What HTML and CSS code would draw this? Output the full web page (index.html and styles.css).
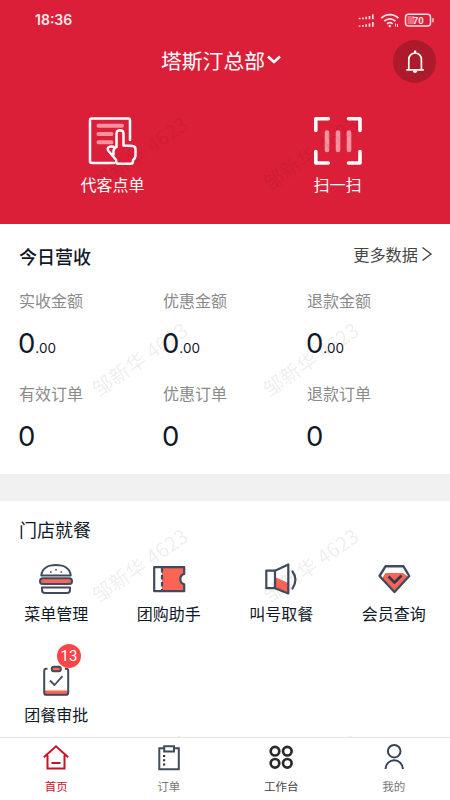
FILE: index.html
```html
<!DOCTYPE html>
<html lang="zh-CN">
<head>
<meta charset="utf-8">
<meta name="viewport" content="width=device-width, initial-scale=1">
<title>塔斯汀总部</title>
<link rel="stylesheet" href="styles.css">
</head>
<body>
<div class="app">
  <header class="header">
    <div class="status">
      <span class="time">18:36</span>
      <svg class="status-icons" width="78" height="18" viewBox="0 0 78 18" fill="none" stroke="#ffdfe2">
        <g stroke-width="1.7">
          <path d="M2.600 8.300V6.800M5.900 8.300V6.400M9.200 8.300V5.700M12.500 8.300V4.900M15.800 8.300V3.200"/>
          <path d="M2.600 15.800V14.400M5.900 15.800V14M9.200 15.800V13.200M12.500 15.800V12.400M15.800 15.800V11"/>
        </g>
        <path d="M24.200 7.200C29 2.400 36.600 2.400 41.500 7.200M27.200 10.200c3.400-3.200 8-3.200 11.300 0M30 12.900c1.800-1.500 4-1.500 5.700 0" stroke-width="1.8"/>
        <circle cx="32.800" cy="15" r="1.200" fill="#ffdfe2" stroke="none"/>
        <path d="M38.500 15.500v-3M40.500 13v3" stroke-width="1"/>
        <rect x="48.500" y="3.200" width="25" height="11.800" rx="3" stroke-width="1.500"/>
        <path d="M50.500 5h7v8.200h-7z" fill="#ed6a7b" stroke="none"/>
        <path d="M76 7.200v4" stroke-width="1.500"/>
        <text class="battery" x="61.300" y="12.500" text-anchor="middle">70</text>
      </svg>
    </div>
    <div class="title-row">
      <span class="store">塔斯汀总部</span>
      <svg class="caret" width="16" height="12" viewBox="0 0 16 12"><path d="M2 2.500L8 8L14 2.500" fill="none" stroke="#fff" stroke-width="2.600"/></svg>
      <span class="bell">
        <svg width="20" height="26" viewBox="0 0 20 26" fill="none" stroke="#fff" stroke-width="1.700"><path d="M3.800 20.500V10.300a6.300 6.300 0 0 1 12.600 0v10.200M1.300 20.900h17.500"/><path d="M10.100 1.500v2.500" stroke-width="2.200"/><path d="M7.700 21.500h4.800a2.400 2.400 0 0 1-4.800 0z" fill="#fff" stroke="none"/></svg>
      </span>
    </div>
    <div class="actions">
      <div class="action">
        <svg width="50" height="50" viewBox="0 0 50 50" fill="none" stroke="#fff" stroke-width="2.500" stroke-linecap="round" stroke-linejoin="round">
          <path d="M42 24V4.500Q42 2.500 40 2.500H4Q2 2.500 2 4.500v40.500Q2 47 4 47H26"/>
          <path d="M10.500 9.700H34M10.500 18h13M10.500 26.300h13" stroke="#f7929f" stroke-width="4"/>
          <path d="M28.500 31V17.800Q28.500 14.300 32 14.300t3.500 3.500V29.500l9 .5q3 .3 3 3v7q0 2-2.500 4v1.500q0 2.300-2.300 2.300H30.500q-2.300 0-2.300-2.300V44l-7.700-9q-1.800-2.800.5-4 2-1 4.500-.300M28.500 31q-3 1.500-3 4v3.500"/>
        </svg>
        <span>代客点单</span>
      </div>
      <div class="action">
        <svg width="50" height="50" viewBox="0 0 50 50" fill="none" stroke="#fff" stroke-width="3.600" stroke-linecap="round" stroke-linejoin="round">
          <path d="M2.800 14.500V2.800h12.500M35.500 2.800H47v11.700M2.800 35.500V47h12.500M35.500 47H47V35.500"/>
          <path d="M14 16.500v17.500M25 16.500v17.500M36 16.500v17.500" stroke="#f7929f" stroke-width="4.600"/>
        </svg>
        <span>扫一扫</span>
      </div>
    </div>
  </header>

  <section class="revenue">
    <div class="revenue-head">
      <h2>今日营收</h2>
      <span class="more">更多数据<svg width="12" height="16" viewBox="0 0 12 16"><path d="M1.500 1.500L10 8l-8.500 6.500" fill="none" stroke="#444" stroke-width="1.400"/></svg></span>
    </div>
    <div class="stats">
      <div class="stat"><span class="label">实收金额</span><span class="value">0<small>.00</small></span></div>
      <div class="stat"><span class="label">优惠金额</span><span class="value">0<small>.00</small></span></div>
      <div class="stat"><span class="label">退款金额</span><span class="value">0<small>.00</small></span></div>
      <div class="stat"><span class="label">有效订单</span><span class="value">0</span></div>
      <div class="stat"><span class="label">优惠订单</span><span class="value">0</span></div>
      <div class="stat"><span class="label">退款订单</span><span class="value">0</span></div>
    </div>
  </section>

  <section class="dining">
    <h2>门店就餐</h2>
    <div class="tools">
      <div class="tool">
        <svg width="36" height="36" viewBox="0 0 36 36" fill="none" stroke="#414b5e" stroke-width="2" stroke-linejoin="round">
          <path d="M3.300 14.500C4 7.500 10 4 18 4s14 3.500 14.700 10.500z"/>
          <rect x="2" y="17.300" width="32" height="5.700" rx="2.850" fill="#fa6556"/>
          <path d="M4 26.500h28v2.500q0 3-3 3H7q-3 0-3-3z"/>
          <path d="M12 11h1.600M17.200 8.800h1.600M22.500 11h1.600" stroke-width="1.400"/>
        </svg>
        <span>菜单管理</span>
      </div>
      <div class="tool">
        <svg width="36" height="36" viewBox="0 0 36 36" fill="none" stroke="#414b5e" stroke-width="2.200" stroke-linejoin="round">
          <path d="M11 6.500H33v6.700a5.200 5.200 0 0 0 0 10V30H11z" fill="#fa6556" stroke="none"/>
          <path d="M3.200 6.200h30v6.700a5.500 5.500 0 0 0 0 10.500v6.800h-30z"/>
          <path d="M11 7v23" stroke-dasharray="4.500 2.500"/>
        </svg>
        <span>团购助手</span>
      </div>
      <div class="tool">
        <svg width="36" height="36" viewBox="0 0 36 36" fill="none" stroke="#414b5e" stroke-width="2.200" stroke-linejoin="round">
          <path d="M12 16l13 6v10.500L12 26.500z" fill="#fa6556" stroke="none"/>
          <path d="M3.300 9.700H12v17.500H3.300zM12 9.700l13.300-6.200v29L12 27.200"/>
          <path d="M29.500 10.500q5.800 8 0 17" stroke-linecap="round"/>
        </svg>
        <span>叫号取餐</span>
      </div>
      <div class="tool">
        <svg width="36" height="36" viewBox="0 0 36 36" fill="none" stroke="#414b5e" stroke-width="2.400" stroke-linejoin="round">
          <path d="M9.500 12h17.500l5.500 4L18.500 30 6 17.500z" fill="#fa6556" stroke="none"/>
          <path d="M9.500 5.300h18l5.700 9.700L18.500 31 3.500 15z"/>
          <path d="M12.500 15.500l6 6 7-7" stroke="#333b4b" stroke-width="2.800"/>
        </svg>
        <span>会员查询</span>
      </div>
      <div class="tool">
        <svg width="36" height="36" viewBox="0 0 36 36" fill="none" stroke="#414b5e" stroke-width="2" stroke-linejoin="round">
          <path d="M6 28.500h24v5H6z" fill="#fa6556" stroke="none"/>
          <path d="M9.500 6.700H8.200Q6.200 6.700 6.200 8.700v22q0 2 2 2h20q2 0 2-2v-22q0-2-2-2H27"/>
          <rect x="13.800" y="4.700" width="9" height="4.600" rx="2" fill="#fa6556"/>
          <path d="M12 18.500l4.500 4.500 8-8.800" stroke-width="1.800"/>
        </svg>
        <b class="badge">13</b>
        <span>团餐审批</span>
      </div>
    </div>
  </section>

  <div class="watermarks" aria-hidden="true">
    <span>邹新华 4623</span><span>邹新华 4623</span>
    <span>邹新华 4623</span><span>邹新华 4623</span>
    <span>邹新华 4623</span><span>邹新华 4623</span>
    <span>邹新华 4623</span><span>邹新华 4623</span>
  </div>

  <nav class="tabs">
    <div class="tab active">
      <svg width="28" height="28" viewBox="0 0 28 28" fill="none" stroke="#c81427" stroke-width="2"><path d="M1.800 14.300L14 3.300l12.200 11M5.500 12v13.500h17V12M9.500 20h9"/></svg>
      <span>首页</span>
    </div>
    <div class="tab">
      <svg width="28" height="28" viewBox="0 0 28 28" fill="none" stroke="#414b5e" stroke-width="2"><path d="M9 5.200H4.300v21h19.500v-21H19M9.200 3.200H19v5.300H9.200z"/><path d="M8 13h2.200M8 17.200h2.200M8 21.400h2.200" stroke="#333"/></svg>
      <span>订单</span>
    </div>
    <div class="tab workbench">
      <svg width="28" height="28" viewBox="0 0 28 28" fill="none" stroke="#2a2a2a" stroke-width="2.700"><circle cx="8" cy="8.200" r="4.300"/><circle cx="20.300" cy="8.200" r="4.300"/><circle cx="8" cy="20.300" r="4.300"/><circle cx="20.300" cy="20.300" r="4.300"/></svg>
      <span>工作台</span>
    </div>
    <div class="tab">
      <svg width="28" height="28" viewBox="0 0 28 28" fill="none" stroke="#34435a" stroke-width="2"><circle cx="14.200" cy="8.200" r="6.300"/><path d="M5.500 26a8.700 8.700 0 0 1 17.400 0"/></svg>
      <span>我的</span>
    </div>
  </nav>
</div>
</body>
</html>
```

FILE: styles.css
```css
* {
  box-sizing: border-box;
}

body {
  margin: 0;
  font-family: "Noto Sans CJK SC", "Noto Sans", sans-serif;
  color: #111827;
  background: #fff;
}

svg {
  display: block;
  flex: none;
}

h2 {
  margin: 0;
  font-size: 18px;
  line-height: 24px;
}

.app {
  position: relative;
  display: flex;
  flex-direction: column;
  width: 450px;
  height: 800px;
  overflow: hidden;
}

.header {
  flex: none;
  height: 224px;
  background: #dc1f38;
  color: #fff;
}

.status {
  display: flex;
  justify-content: space-between;
  align-items: center;
  height: 40px;
  padding: 0 15px 0 35px;
}

.time {
  font: 600 14px/20px Inter, sans-serif;
  color: #ffe8ea;
}

.battery {
  font: 700 9.500px Roboto, sans-serif;
  fill: #ffe8ea;
  stroke: none;
}

.title-row {
  position: relative;
  display: flex;
  align-items: center;
  height: 40px;
  padding-left: 161px;
}

.store {
  margin-top: -1px;
  font-size: 20.800px;
  line-height: 40px;
}

.caret {
  margin-left: 1px;
}

.bell {
  position: absolute;
  top: 0;
  right: 14px;
  display: flex;
  align-items: center;
  justify-content: center;
  width: 43px;
  height: 43px;
  border-radius: 50%;
  background: #ac1a2c;
}

.actions {
  display: grid;
  grid-template-columns: 1fr 1fr;
  padding-top: 36px;
}

.action {
  display: flex;
  flex-direction: column;
  align-items: center;
  gap: 6px;
  font-size: 16px;
  line-height: 24px;
}

.revenue {
  flex: none;
  height: 250px;
  padding: 20px 17px 0 19px;
}

.revenue-head {
  display: flex;
  justify-content: space-between;
  align-items: center;
  height: 24px;
}

.revenue-head h2 {
  font-weight: 500;
}

.more {
  display: flex;
  align-items: center;
  gap: 3px;
  margin-top: -4px;
  font-size: 16.200px;
  line-height: 24px;
  color: #444;
}

.stats {
  display: grid;
  grid-template-columns: repeat(3, 144px);
  grid-auto-rows: 93px;
  padding-top: 20px;
}

.stat {
  display: flex;
  flex-direction: column;
  gap: 11px;
}

.label {
  font-size: 16px;
  line-height: 24px;
  color: #8a8a8a;
}

.value {
  font-family: Inter, sans-serif;
  font-size: 27.500px;
  line-height: 40px;
  margin-left: -1px;
}

.value small {
  font-size: 13.500px;
}

.dining {
  flex: none;
  height: 263px;
  border-top: 27px solid #f1f1f1;
}

.dining h2 {
  padding: 16px 19px 0;
  font-weight: 400;
}

.tools {
  display: grid;
  grid-template-columns: repeat(4, 1fr);
  grid-auto-rows: 101px;
  padding-top: 20px;
}

.tool {
  position: relative;
  display: flex;
  flex-direction: column;
  align-items: center;
  gap: 4px;
  font-size: 16px;
  line-height: 24px;
}

.badge {
  position: absolute;
  top: -18px;
  left: 57px;
  width: 24px;
  height: 24px;
  border-radius: 50%;
  background: #fb4649;
  color: #fff;
  font: 400 15px/25px Roboto, sans-serif;
  text-align: center;
}

.watermarks {
  position: absolute;
  top: 50px;
  left: 54px;
  display: grid;
  grid-template-columns: 171px 171px;
  grid-auto-rows: 206px;
  place-items: center;
  pointer-events: none;
}

.watermarks span {
  transform: rotate(-35deg);
  font-size: 20px;
  line-height: 24px;
  letter-spacing: 0.300px;
  white-space: nowrap;
  color: rgba(0, 0, 0, 0.085);
}

.tabs {
  position: relative;
  display: grid;
  flex: none;
  grid-template-columns: repeat(4, 1fr);
  height: 63px;
  border-top: 1px solid #e5e5e5;
  background: #fff;
}

.tab {
  display: flex;
  flex-direction: column;
  align-items: center;
  gap: 7px;
  padding-top: 5px;
  font-size: 11.500px;
  line-height: 16px;
  color: #777;
}

.tab.active {
  color: #c81427;
}

.tab.workbench {
  color: #444;
}
```
